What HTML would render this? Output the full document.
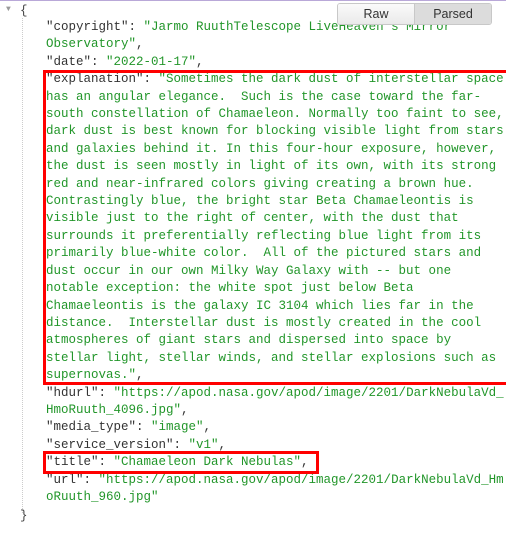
<!DOCTYPE html>
<html><head><style>
body{margin:0;width:506px;height:544px;overflow:hidden;background:#fff;position:relative;font-family:"Liberation Mono",monospace;font-size:12.5px;}
.top{position:absolute;left:0;top:0;width:506px;height:1px;background:#b9a8d8}
.l{position:absolute;left:46px;white-space:pre;line-height:17.4px;color:#333}
.s{color:#22962a}
.guide{position:absolute;left:22px;top:18px;height:495px;border-left:1px dotted #ccc}
.box{position:absolute;border:3px solid #f00;box-sizing:border-box}
.btns{position:absolute;left:337px;top:3px;width:155px;height:22px;border:1px solid #c8c8c8;border-radius:3px;display:flex;font-family:"Liberation Sans",sans-serif;font-size:12.5px;color:#333;box-sizing:border-box;overflow:hidden}
.btns div{flex:1;text-align:center;line-height:20px;background:linear-gradient(#fafafa,#eaeaea)}
.btns div+div{background:#dcdcdc;border-left:1px solid #c8c8c8}
</style></head><body>
<div class="top"></div>
<div style="position:absolute;left:6px;top:5px;font-size:8px;color:#999">▼</div>
<div style="position:absolute;left:20px;top:3px;line-height:17.4px;color:#444">{</div>
<div class="guide"></div>
<div class="l" style="top:19px">"copyright": <span class="s">"Jarmo RuuthTelescope LiveHeaven's Mirror
Observatory"</span>,
"date": <span class="s">"2022-01-17"</span>,
"explanation": <span class="s">"Sometimes the dark dust of interstellar space
has an angular elegance.  Such is the case toward the far-
south constellation of Chamaeleon. Normally too faint to see,
dark dust is best known for blocking visible light from stars
and galaxies behind it. In this four-hour exposure, however,
the dust is seen mostly in light of its own, with its strong
red and near-infrared colors giving creating a brown hue.
Contrastingly blue, the bright star Beta Chamaeleontis is
visible just to the right of center, with the dust that
surrounds it preferentially reflecting blue light from its
primarily blue-white color.  All of the pictured stars and
dust occur in our own Milky Way Galaxy with -- but one
notable exception: the white spot just below Beta
Chamaeleontis is the galaxy IC 3104 which lies far in the
distance.  Interstellar dust is mostly created in the cool
atmospheres of giant stars and dispersed into space by
stellar light, stellar winds, and stellar explosions such as
supernovas."</span>,
"hdurl": <span class="s">"https://apod.nasa.gov/apod/image/2201/DarkNebulaVd_
HmoRuuth_4096.jpg"</span>,
"media_type": <span class="s">"image"</span>,
"service_version": <span class="s">"v1"</span>,
"title": <span class="s">"Chamaeleon Dark Nebulas"</span>,
"url": <span class="s">"https://apod.nasa.gov/apod/image/2201/DarkNebulaVd_Hm
oRuuth_960.jpg"</span></div>
<div style="position:absolute;left:20px;top:508px;line-height:17.4px;color:#444">}</div>
<div class="box" style="left:43px;top:70px;width:470px;height:315px"></div>
<div class="box" style="left:43px;top:451px;width:276px;height:23px"></div>
<div class="btns"><div>Raw</div><div>Parsed</div></div>
</body></html>
